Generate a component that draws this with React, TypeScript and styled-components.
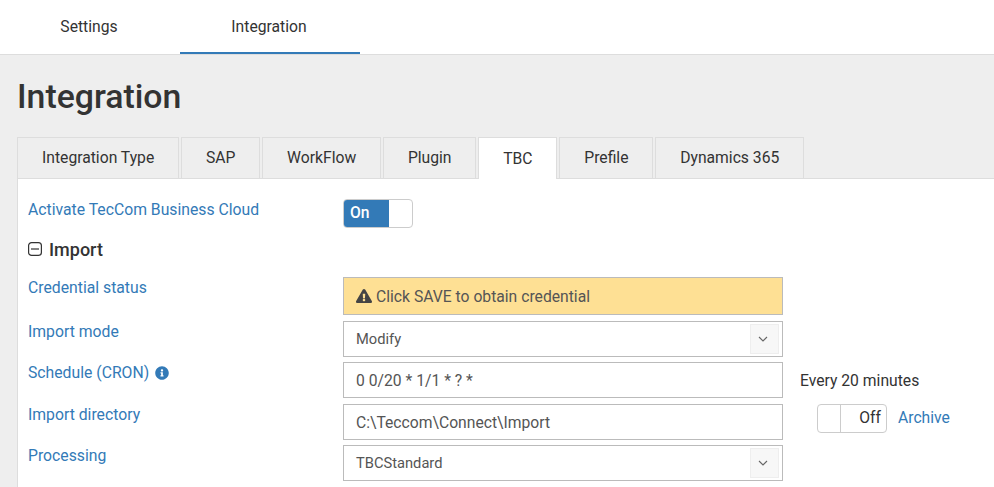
import React from "react";
import styled, { createGlobalStyle } from "styled-components";
import { FaExclamationTriangle, FaInfoCircle } from "react-icons/fa";

const GlobalStyle = createGlobalStyle`
  html, body { margin: 0; padding: 0; height: 100%; overflow: hidden; background: #eeeeee; }
  body { font-family: Roboto, "Liberation Sans", sans-serif; color: #333; }
  * { box-sizing: border-box; }
`;

const TopNav = styled.nav`
  display: flex;
  height: 55px;
  background: #fff;
  border-bottom: 1px solid #dddddd;
`;

const NavItem = styled.div<{ $active?: boolean }>`
  width: 180px;
  height: 54px;
  display: flex;
  align-items: center;
  justify-content: center;
  padding-right: 2px;
  font-size: 15.7px;
  color: #333;
  border-bottom: 2px solid ${({ $active }) => ($active ? "#337ab7" : "transparent")};
`;

const Content = styled.main`
  padding: 0 0 0 17px;
`;

const Title = styled.h1`
  margin: 0;
  padding: 22px 0 0 0;
  height: 82px;
  font-size: 33.8px;
  line-height: 40px;
  font-weight: 500;
  color: #333;
`;

const Tabs = styled.div`
  display: flex;
  gap: 2px;
  height: 42px;
  border-bottom: 1px solid #dddddd;
`;

const Tab = styled.div<{ $active?: boolean }>`
  height: ${({ $active }) => ($active ? "42px" : "41px")};
  padding: 0 23.7px 1px 24px;
  display: flex;
  align-items: center;
  font-size: 15.7px;
  color: #333;
  background: ${({ $active }) => ($active ? "#fff" : "#eeeeee")};
  border: 1px solid #dddddd;
  border-bottom: none;
`;

const Panel = styled.section`
  background: #fff;
  border-left: 1px solid #dddddd;
  padding: 20px 0 0 10px;
  height: 308px;
`;

const Row = styled.div<{ $after: number }>`
  display: flex;
  align-items: flex-start;
  margin-bottom: ${({ $after }) => $after}px;
`;

const Label = styled.label`
  width: 315px;
  flex-shrink: 0;
  padding-top: 1px;
  font-size: 15.75px;
  line-height: 20px;
  color: #337ab7;
  display: flex;
  align-items: center;
  gap: 6px;
`;

const Toggle = styled.div<{ $on: boolean }>`
  width: 70px;
  height: 29px;
  display: flex;
  justify-content: ${({ $on }) => ($on ? "flex-start" : "flex-end")};
  border: 1px solid #cccccc;
  border-radius: 4px;
  overflow: hidden;
  background: #fff;
  font-size: 15.7px;
  flex-shrink: 0;
`;

const ToggleOn = styled.span`
  width: 45px;
  padding-left: 6px;
  line-height: 25px;
  background: #337ab7;
  color: #fff;
  font-weight: 500;
`;

const ToggleOff = styled.span`
  width: 46px;
  padding-right: 5px;
  line-height: 25px;
  text-align: right;
  color: #333;
  border-left: 1px solid #cccccc;
`;

const SectionHead = styled.h3`
  display: flex;
  align-items: center;
  gap: 7px;
  margin: 0 0 16px;
  height: 24px;
  font-size: 18px;
  font-weight: 500;
  color: #333;
`;

const Alert = styled.div`
  width: 440px;
  height: 38px;
  display: flex;
  align-items: center;
  gap: 4px;
  padding-left: 12px;
  background: #fee094;
  border: 1px solid #bbbbbb;
  font-size: 15.7px;
  color: #555;
`;

const Input = styled.div`
  width: 440px;
  height: 36px;
  display: flex;
  align-items: center;
  padding-left: 12px;
  border: 1px solid #bbbbbb;
  font-size: 15.7px;
  color: #555;
  background: #fff;
  flex-shrink: 0;
`;

const Select = styled(Input)`
  justify-content: space-between;
  padding-right: 3px;
  font-size: 14.7px;
`;

const Caret = styled.span`
  width: 29px;
  height: 30px;
  display: flex;
  align-items: center;
  justify-content: center;
  padding-right: 3px;
  background: #f7f7f7;
  border: 1px solid #eeeeee;
`;

const Hint = styled.span`
  margin-left: 17px;
  height: 36px;
  padding-top: 1px;
  font-size: 15.7px;
  line-height: 36px;
  color: #333;
`;

const Archive = styled.div`
  margin-left: 34px;
  display: flex;
  align-items: flex-start;
  gap: 11px;
  font-size: 15.7px;
  line-height: 27px;
  color: #337ab7;
`;

const Chevron = () => (
  <svg width="12" height="12" viewBox="0 0 12 12" fill="none" stroke="#666" strokeWidth="1.1">
    <path d="M2 4l4 4 4-4" />
  </svg>
);

const Collapse = () => (
  <svg width="14" height="14" viewBox="0 0 14 14" fill="none" stroke="#333" strokeWidth="1.2">
    <rect x="0.6" y="0.6" width="12.8" height="12.8" rx="3" />
    <path d="M3 7h8" />
  </svg>
);

const tabs = ["Integration Type", "SAP", "WorkFlow", "Plugin", "TBC", "Prefile", "Dynamics 365"];

export default function App() {
  return (
    <>
      <GlobalStyle />
      <TopNav>
        <NavItem>Settings</NavItem>
        <NavItem $active>Integration</NavItem>
      </TopNav>
      <Content>
        <Title>Integration</Title>
        <Tabs>
          {tabs.map((t) => (
            <Tab key={t} $active={t === "TBC"}>
              {t}
            </Tab>
          ))}
        </Tabs>
        <Panel>
          <Row $after={9}>
            <Label>Activate TecCom Business Cloud</Label>
            <Toggle $on>
              <ToggleOn>On</ToggleOn>
            </Toggle>
          </Row>
          <SectionHead>
            <Collapse />
            Import
          </SectionHead>
          <Row $after={6}>
            <Label>Credential status</Label>
            <Alert>
              <FaExclamationTriangle size={16} color="#444" />
              Click SAVE to obtain credential
            </Alert>
          </Row>
          <Row $after={5}>
            <Label>Import mode</Label>
            <Select>
              Modify
              <Caret>
                <Chevron />
              </Caret>
            </Select>
          </Row>
          <Row $after={6}>
            <Label>
              Schedule (CRON)
              <FaInfoCircle size={14} color="#337ab7" />
            </Label>
            <Input>0 0/20 * 1/1 * ? *</Input>
            <Hint>Every 20 minutes</Hint>
          </Row>
          <Row $after={5}>
            <Label>Import directory</Label>
            <Input>C:\Teccom\Connect\Import</Input>
            <Archive>
              <Toggle $on={false}>
                <ToggleOff>Off</ToggleOff>
              </Toggle>
              Archive
            </Archive>
          </Row>
          <Row $after={0}>
            <Label>Processing</Label>
            <Select>
              TBCStandard
              <Caret>
                <Chevron />
              </Caret>
            </Select>
          </Row>
        </Panel>
      </Content>
    </>
  );
}
